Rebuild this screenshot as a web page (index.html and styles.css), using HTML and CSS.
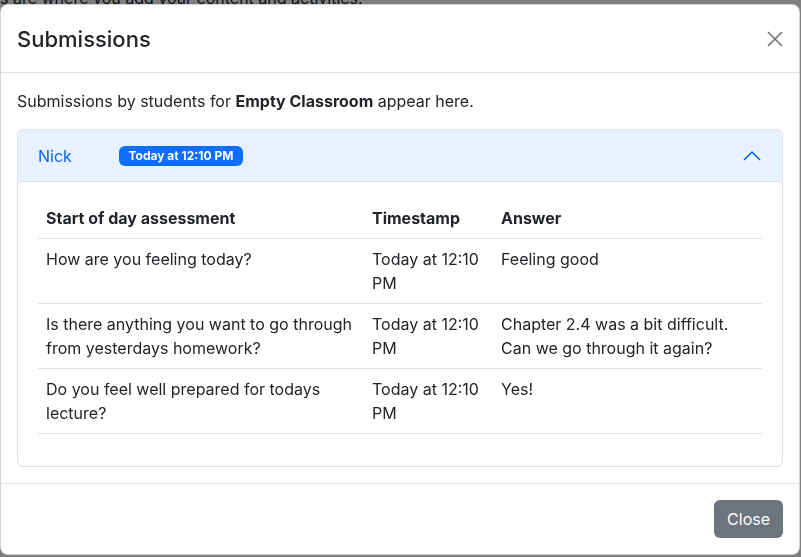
FILE: index.html
```html
<!DOCTYPE html>
<html lang="en">
<head>
<meta charset="utf-8">
<title>Submissions</title>
<link rel="stylesheet" href="styles.css">
</head>
<body>
<div class="page">
  <p class="page-intro">s are where you add your content and activities.</p>
  <p class="page-link">on Submissions</p>
</div>
<div class="backdrop"></div>
<div class="modal">
  <div class="modal-header">
    <h5 class="modal-title">Submissions</h5>
    <button class="btn-close" type="button" aria-label="Close">
      <svg width="16" height="16" viewBox="0 0 16 16"><path d="M1 1 L15 15 M15 1 L1 15" stroke="currentColor" stroke-width="1.6" fill="none"/></svg>
    </button>
  </div>
  <div class="modal-body">
    <p class="intro">Submissions by students for <strong>Empty Classroom</strong> appear here.</p>
    <div class="accordion">
      <button class="accordion-button" type="button">
        <span class="student">Nick</span>
        <span class="badge">Today at 12:10 PM</span>
        <svg class="chevron" width="20" height="20" viewBox="0 0 20 20"><path d="M2 14 L10 6 L18 14" stroke="currentColor" stroke-width="1.5" fill="none"/></svg>
      </button>
      <div class="accordion-body">
        <table class="table">
          <colgroup>
            <col class="col-q">
            <col class="col-t">
            <col class="col-a">
          </colgroup>
          <thead>
            <tr><th>Start of day assessment</th><th>Timestamp</th><th>Answer</th></tr>
          </thead>
          <tbody>
            <tr><td>How are you feeling today?</td><td>Today at 12:10 PM</td><td>Feeling good</td></tr>
            <tr><td>Is there anything you want to go through from yesterdays homework?</td><td>Today at 12:10 PM</td><td>Chapter 2.4 was a bit difficult. Can we go through it again?</td></tr>
            <tr><td>Do you feel well prepared for todays lecture?</td><td>Today at 12:10 PM</td><td>Yes!</td></tr>
          </tbody>
        </table>
      </div>
    </div>
  </div>
  <div class="modal-footer">
    <button class="btn-secondary" type="button">Close</button>
  </div>
</div>
</body>
</html>
```
FILE: styles.css
```css
* { box-sizing: border-box; }
html, body { margin: 0; padding: 0; }
body {
  font-family: Inter, "Noto Sans", sans-serif;
  font-size: 16px;
  line-height: 1.5;
  color: #212529;
  background: #fff;
  width: 801px;
  height: 557px;
  overflow: hidden;
}
.page {
  height: 557px;
  display: flex;
  flex-direction: column;
  justify-content: space-between;
}
.page-intro {
  margin: -14px 0 0 0;
  color: #212529;
}
.page-link {
  margin: 0 0 -20px 30px;
  color: #0a58ca;
}
.backdrop {
  position: fixed;
  inset: 0;
  background: rgba(0, 0, 0, 0.5);
}
.modal {
  position: fixed;
  left: 0;
  top: 4px;
  width: 800px;
  background: #fff;
  border: 1px solid rgba(0, 0, 0, 0.175);
  border-radius: 8px;
  display: flex;
  flex-direction: column;
  overflow: hidden;
}
.modal-header {
  display: flex;
  align-items: center;
  justify-content: space-between;
  padding: 19px 16px 18px 16px;
  border-bottom: 1px solid #dee2e6;
}
.modal-title {
  margin: 0;
  font-size: 22px;
  font-weight: 500;
  line-height: 30px;
}
.btn-close {
  border: 0;
  background: none;
  padding: 0;
  width: 16px;
  height: 16px;
  color: #737373;
  display: flex;
}
.modal-body {
  padding: 16px;
}
.intro {
  margin: 0 0 16px 0;
}
.intro strong { font-weight: 700; }
.accordion {
  border: 1px solid #dee2e6;
  border-radius: 6px;
  overflow: hidden;
}
.accordion-button {
  width: 100%;
  display: flex;
  align-items: center;
  border: 0;
  border-bottom: 1px solid #dee2e6;
  background: #e7f1ff;
  color: #0c63e4;
  font: inherit;
  padding: 14px 20px 13px 20px;
  text-align: left;
}
.student {
  width: 81px;
}
.badge {
  background: #0d6efd;
  color: #fff;
  font-size: 12px;
  font-weight: 700;
  line-height: 1;
  padding: 4px 9.5px;
  border-radius: 6px;
}
.chevron {
  margin-left: auto;
  color: #0c63e4;
}
.accordion-body {
  padding: 16px 20px;
}
.table {
  width: 100%;
  border-collapse: collapse;
  margin-bottom: 16px;
}
.col-q { width: 326px; }
.col-t { width: 129px; }
.col-a { width: 269px; }
.table th, .table td {
  text-align: left;
  vertical-align: top;
  padding: 8px;
  border-bottom: 1px solid #dee2e6;
}
.table th { font-weight: 700; }
.modal-footer {
  display: flex;
  justify-content: flex-end;
  padding: 16px;
  border-top: 1px solid #dee2e6;
}
.btn-secondary {
  font: inherit;
  color: #fff;
  background: #6c757d;
  border: 0;
  border-radius: 6px;
  padding: 7px 13px;
  line-height: 24px;
}
```
